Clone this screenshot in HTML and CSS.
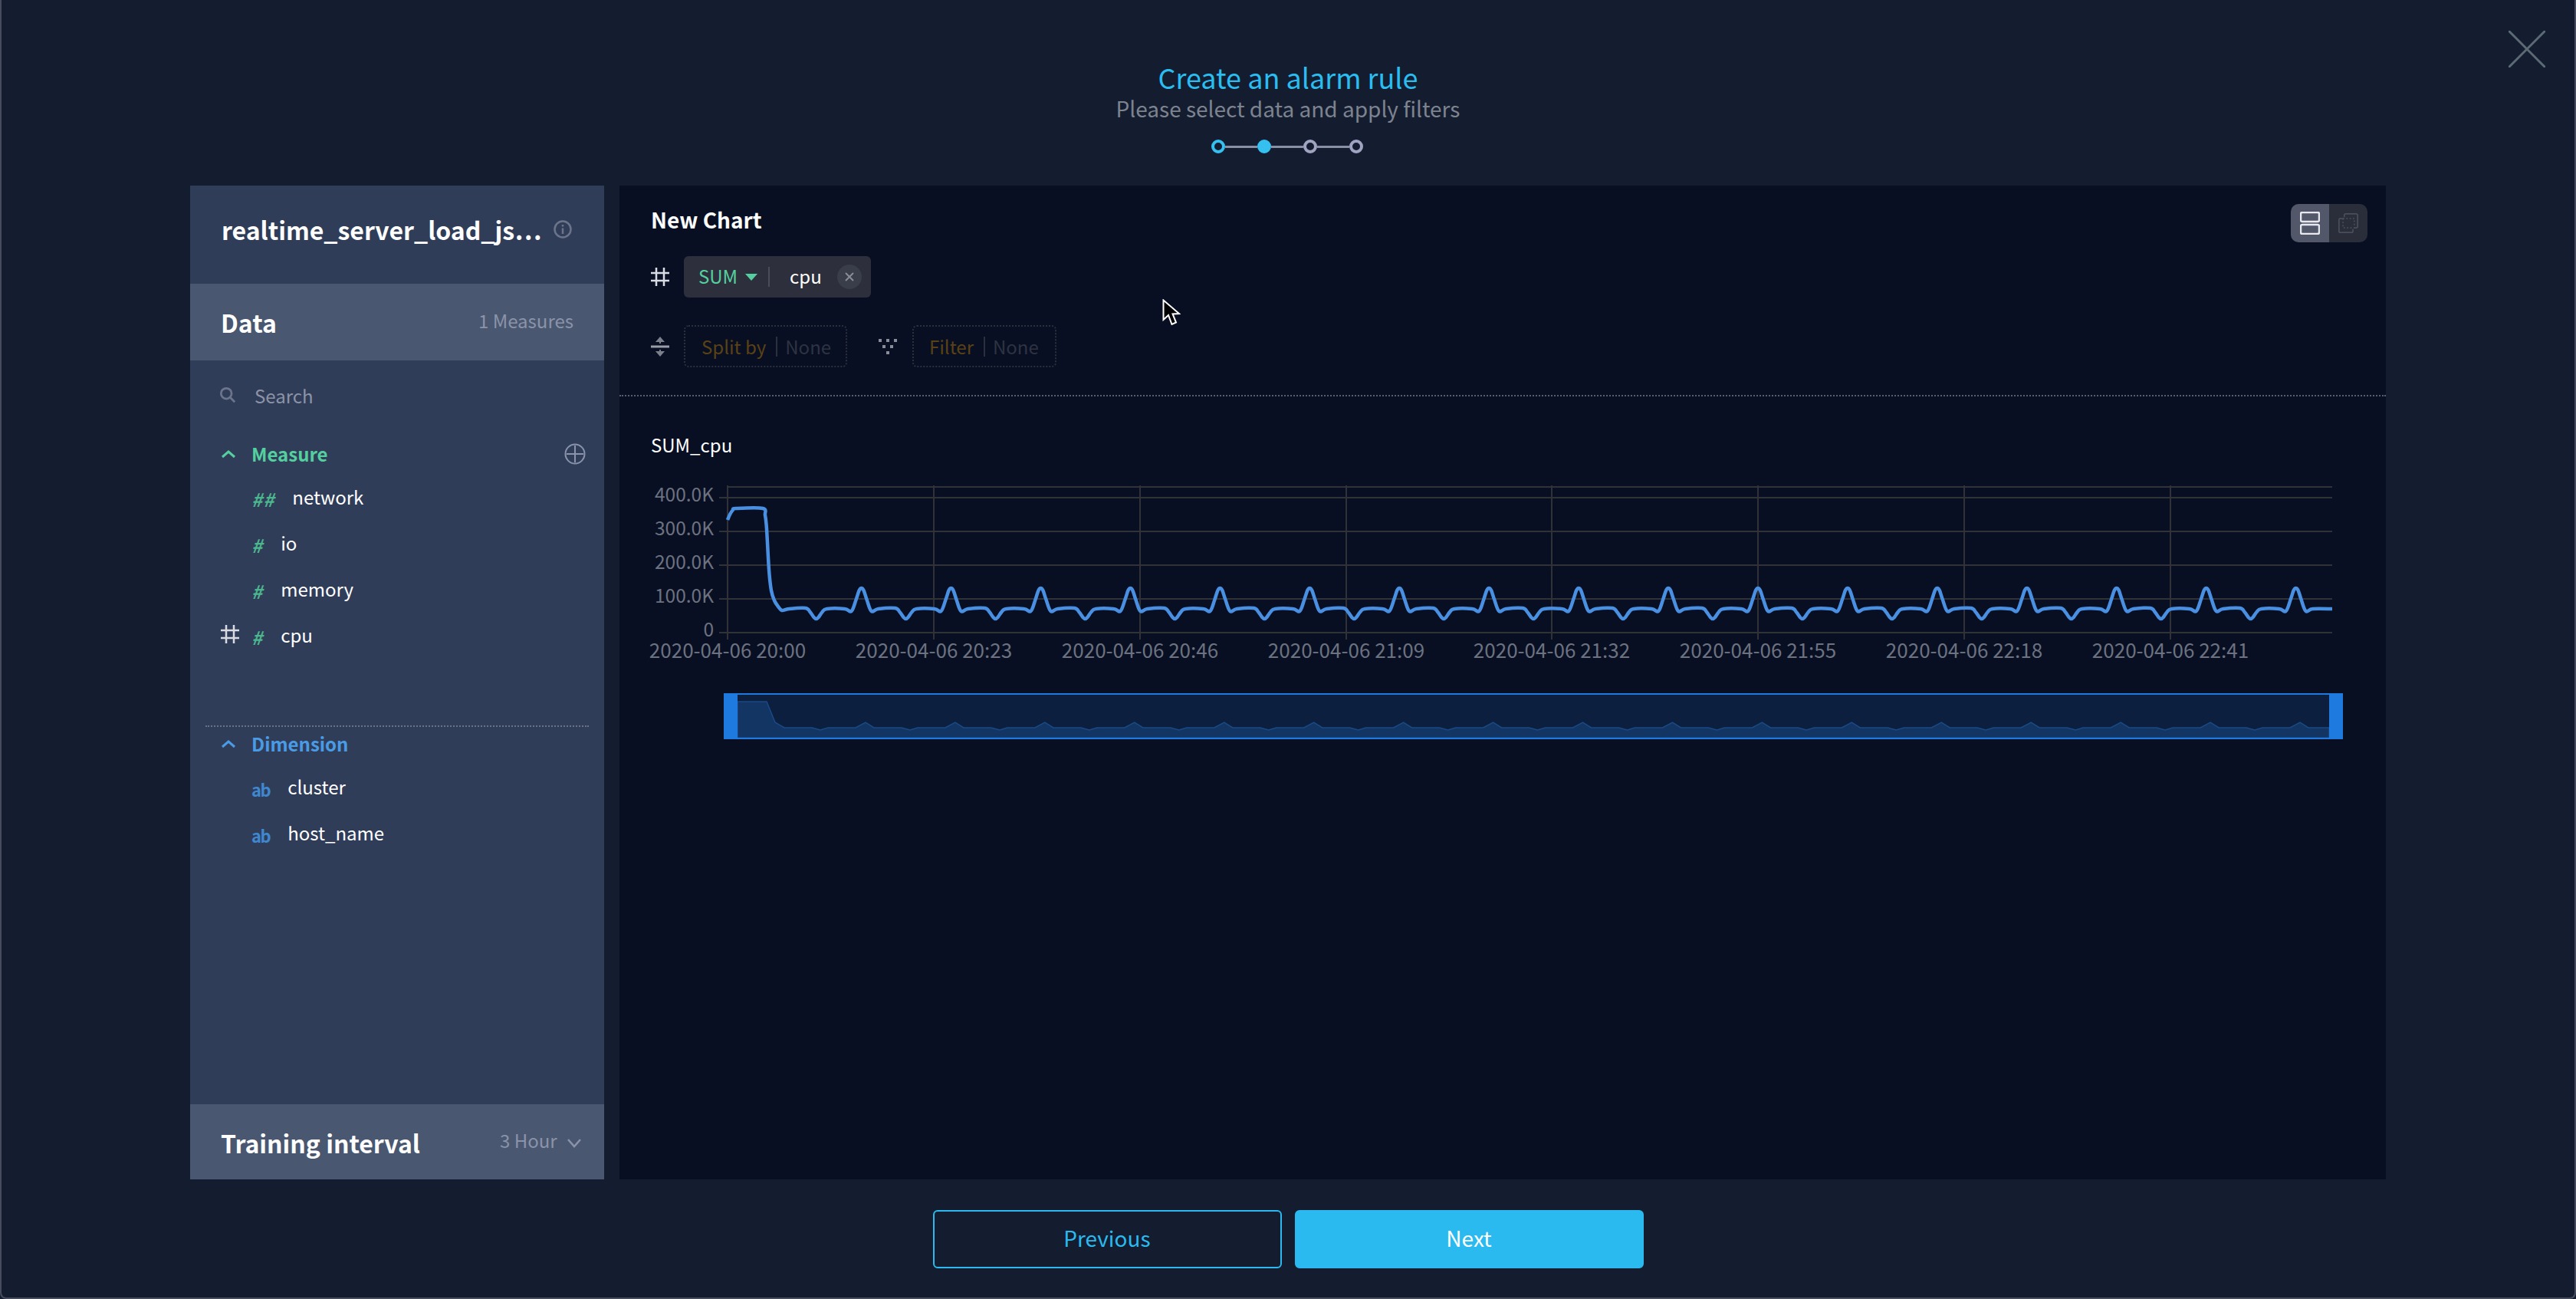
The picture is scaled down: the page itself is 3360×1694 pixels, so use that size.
FILE: index.html
```html
<!DOCTYPE html>
<html lang="en">

<head>
    <meta charset="UTF-8">
    <title>Create an alarm rule</title>
    <link rel="stylesheet" href="styles.css">
</head>

<body>
    <div class="app">
        <svg class="close" viewBox="0 0 48 48"><path d="M0 0L48 48M48 0L0 48" /></svg>

        <header class="head">
            <h1>Create an alarm rule</h1>
            <p>Please select data and apply filters</p>
            <div class="steps">
                <span class="step done"></span><i></i>
                <span class="step on"></span><i></i>
                <span class="step"></span><i></i>
                <span class="step"></span>
            </div>
        </header>

        <div class="panels">
            <aside class="side">
                <div class="side-title">
                    <span class="ds-name">realtime_server_load_js⋯</span>
                    <svg class="info" viewBox="0 0 24 24">
                        <circle cx="12" cy="12" r="10.5" />
                        <path d="M12 10.5V18M12 6v2.4" />
                    </svg>
                </div>
                <div class="bar">
                    <b>Data</b>
                    <span class="bar-val up">1 Measures</span>
                </div>
                <div class="side-body">
                    <div class="search">
                        <svg viewBox="0 0 24 24">
                            <circle cx="10" cy="10" r="7.5" />
                            <path d="M15.5 15.5L22 22" />
                        </svg>
                        <span>Search</span>
                    </div>

                    <div class="group-head green">
                        <svg class="chev" viewBox="0 0 20 12"><path d="M2 10L10 3L18 10" /></svg>
                        <span>Measure</span>
                        <svg class="plus" viewBox="0 0 28 28">
                            <circle cx="14" cy="14" r="12.5" />
                            <path d="M14 3V25M3 14H25" />
                        </svg>
                    </div>
                    <ul class="fields">
                        <li><em class="num">##</em>network</li>
                        <li><em class="num">#</em>io</li>
                        <li><em class="num">#</em>memory</li>
                        <li>
                            <svg class="hash used" viewBox="0 0 24 24"><path d="M7 0V24M17 0V24M0 7H24M0 17H24" /></svg>
                            <em class="num">#</em>cpu
                        </li>
                    </ul>

                    <div class="group-head blue dim">
                        <svg class="chev" viewBox="0 0 20 12"><path d="M2 10L10 3L18 10" /></svg>
                        <span>Dimension</span>
                    </div>
                    <ul class="fields second">
                        <li><em class="str">ab</em>cluster</li>
                        <li><em class="str">ab</em>host_name</li>
                    </ul>
                </div>
                <div class="bar bar-low">
                    <b>Training interval</b>
                    <span class="bar-val">3 Hour
                        <svg viewBox="0 0 18 12"><path d="M1 1L9 10L17 1" /></svg>
                    </span>
                </div>
            </aside>

            <main class="main">
                <div class="query">
                    <div class="chart-title">
                        <b>New Chart</b>
                        <div class="toggle">
                            <span class="tog on">
                                <svg viewBox="0 0 26 30">
                                    <rect x="1" y="1" width="24" height="12" rx="2" />
                                    <rect x="1" y="17" width="24" height="12" rx="2" />
                                </svg>
                            </span>
                            <span class="tog">
                                <svg viewBox="0 0 30 30">
                                    <path d="M9 6V3a2 2 0 0 1 2-2h16a2 2 0 0 1 2 2v17a2 2 0 0 1-2 2h-3" />
                                    <path d="M6 8H3a2 2 0 0 0-2 2v17a2 2 0 0 0 2 2h17a2 2 0 0 0 2-2v-3" />
                                    <rect x="7" y="8" width="17" height="14" stroke-dasharray="2 3" />
                                </svg>
                            </span>
                        </div>
                    </div>
                    <div class="row row-measure">
                        <svg class="hash" viewBox="0 0 24 24"><path d="M7 0V24M17 0V24M0 7H24M0 17H24" /></svg>
                        <div class="chip">
                            <span class="agg">SUM</span>
                            <span class="tri"></span>
                            <span class="chip-sep"></span>
                            <span class="chip-name">cpu</span>
                            <span class="chip-x">
                                <svg viewBox="0 0 12 12"><path d="M1 1L11 11M11 1L1 11" /></svg>
                            </span>
                        </div>
                    </div>
                    <div class="row row-slots">
                        <svg class="split" viewBox="0 0 24 28">
                            <path class="fat" d="M0 14H24" />
                            <path d="M12 2V10M12 18V26" />
                            <path class="solid" d="M6 8L12 1L18 8ZM6 20L12 27L18 20Z" />
                        </svg>
                        <div class="slot">
                            <span class="slot-name">Split by</span><span class="slot-sep"></span><span class="slot-val">None</span>
                        </div>
                        <svg class="funnel" viewBox="0 0 24 20">
                            <rect x="0" y="0" width="4" height="4" />
                            <rect x="10" y="0" width="4" height="4" />
                            <rect x="20" y="0" width="4" height="4" />
                            <rect x="5" y="8" width="4" height="4" />
                            <rect x="15" y="8" width="4" height="4" />
                            <rect x="10" y="16" width="4" height="4" />
                        </svg>
                        <div class="slot slot-filter">
                            <span class="slot-name">Filter</span><span class="slot-sep"></span><span class="slot-val">None</span>
                        </div>
                    </div>
                </div>

                <div class="chart-wrap">
                    <div class="series">SUM_cpu</div>
                    <svg id="chart" class="chart" viewBox="808 620 2304 360"></svg>
                </div>

                <svg class="cursor" viewBox="0 0 24 36">
                    <path d="M1.5 1.5V27L8 21L12.5 33L18 30.5L13.5 19.5L22 19Z" />
                </svg>
            </main>
        </div>

        <footer class="foot">
            <button class="btn btn-line">Previous</button>
            <button class="btn btn-fill">Next</button>
        </footer>
    </div>

    <script src="chart.js"></script>
</body>

</html>
```

FILE: styles.css
```css
* {
    box-sizing: border-box;
}

body {
    margin: 0;
    background: #141d30;
    font-family: "Noto Sans CJK KR", "Noto Sans", sans-serif;
    color: #fff;
}

.app {
    position: relative;
    height: 1694px;
    background: #141d30;
    border-left: 2px solid #474c5d;
    border-right: 2px solid #474c5d;
    border-bottom: 2px solid #474c5d;
    border-radius: 0 0 8px 8px;
    display: flex;
    flex-direction: column;
}

.close {
    position: absolute;
    top: 40px;
    right: 38px;
    width: 48px;
    height: 48px;
    fill: none;
    stroke: #5c6a75;
    stroke-width: 3;
}

/* header */
.head {
    height: 242px;
    padding-top: 78px;
    text-align: center;
}

.head h1 {
    margin: 0;
    font-size: 36px;
    line-height: 44px;
    font-weight: 400;
    color: #2abdf0;
}

.head p {
    margin: 0;
    font-size: 28px;
    line-height: 38px;
    color: #7d838f;
}

.steps {
    margin: 22px 2px 0 0;
    display: flex;
    justify-content: center;
    align-items: center;
}

.steps i {
    width: 42px;
    height: 3px;
    background: #8a8fa8;
}

.step {
    width: 18px;
    height: 18px;
    border-radius: 50%;
    border: 4px solid #a0a4c0;
}

.step.done {
    border-color: #35c0f0;
}

.step.on {
    border-color: #35c0f0;
    background: #35c0f0;
}

/* panels */
.panels {
    height: 1296px;
    padding-left: 246px;
    display: flex;
}

.side {
    width: 540px;
    background: #303d59;
    display: flex;
    flex-direction: column;
}

.side-title {
    height: 128px;
    padding: 0 0 14px 41px;
    display: flex;
    align-items: center;
}

.ds-name {
    width: 416px;
    font-size: 32px;
    font-weight: 700;
    white-space: nowrap;
}

.info {
    width: 24px;
    height: 24px;
    margin-left: 17px;
    fill: none;
    stroke: #6c748a;
    stroke-width: 2.5;
}

.bar {
    height: 100px;
    background: #4a5770;
    padding: 0 40px;
    display: flex;
    justify-content: space-between;
    align-items: center;
}

.bar b {
    font-size: 32px;
    font-weight: 700;
}

.bar-val {
    font-size: 24px;
    color: #8a93aa;
}

.bar-val.up {
    margin-top: -5px;
}

.bar-low {
    height: 98px;
    padding-right: 30px;
}

.bar-low b {
    margin-top: 2px;
}

.bar-low .bar-val {
    margin-top: -6px;
}

.bar-val svg {
    width: 18px;
    height: 12px;
    margin-left: 8px;
    fill: none;
    stroke: #8a93aa;
    stroke-width: 2.5;
}

.side-body {
    flex: 1;
}

.search {
    margin-top: 15px;
    height: 60px;
    padding-left: 38px;
    display: flex;
    align-items: center;
    gap: 24px;
    font-size: 24px;
    color: #8c93a6;
}

.search svg {
    width: 22px;
    height: 22px;
    fill: none;
    stroke: #6c748a;
    stroke-width: 3;
}

.group-head {
    margin-top: 23px;
    height: 46px;
    padding: 0 12px 0 40px;
    display: flex;
    align-items: center;
    font-size: 24px;
    font-weight: 700;
}

.group-head span {
    margin-left: 20px;
    flex: 1;
}

.green {
    color: #55cf9f;
}

.blue {
    color: #4a9be6;
}

.chev {
    width: 20px;
    height: 12px;
    margin-top: 2px;
    fill: none;
    stroke: currentColor;
    stroke-width: 3;
}

.plus {
    width: 28px;
    height: 28px;
    margin: 2px 12px 0 0;
    fill: none;
    stroke: #8a93aa;
    stroke-width: 2;
}

.dim {
    margin: 89px 20px 0;
    padding: 0 0 2px 20px;
    height: 46px;
    border-top: 2px dotted #6a7389;
}

.fields {
    list-style: none;
    margin: 3px 0 0;
    padding: 0 0 0 80px;
    position: relative;
}

.fields.second {
    margin-top: 3px;
}

.fields li {
    position: relative;
    height: 60px;
    display: flex;
    align-items: center;
    gap: 23px;
    font-size: 24px;
}

.fields em {
    line-height: 1;
    font-weight: 700;
    margin-top: 8px;
}

.num {
    font-size: 24px;
    color: #4cb68e;
    letter-spacing: 1px;
}

.str {
    font-size: 22px;
    font-style: normal;
    color: #3f87cf;
    letter-spacing: -1.5px;
}

.hash {
    width: 24px;
    height: 24px;
    fill: none;
    stroke: #d8dbe2;
    stroke-width: 2.5;
}

.hash.used {
    position: absolute;
    left: -40px;
    top: 18px;
}

/* main panel */
.main {
    position: relative;
    width: 2304px;
    margin-left: 20px;
    background: #080f23;
}

.query {
    height: 275px;
    padding: 24px 0 0 41px;
    border-bottom: 2px dotted #5a5e6a;
}

.chart-title {
    height: 40px;
    padding-right: 24px;
    display: flex;
    justify-content: space-between;
    align-items: flex-start;
    font-size: 28px;
    line-height: 40px;
}

.toggle {
    display: flex;
    border-radius: 10px;
    overflow: hidden;
}

.tog {
    width: 50px;
    height: 50px;
    background: #2a2d3a;
    display: flex;
    justify-content: center;
    align-items: center;
}

.tog.on {
    background: #525769;
}

.tog svg {
    width: 26px;
    height: 30px;
    fill: none;
    stroke: #4a4d5a;
    stroke-width: 2;
}

.tog.on svg {
    stroke: #e6e8ee;
    stroke-width: 2.5;
}

.row {
    display: flex;
    align-items: center;
}

.row-measure {
    margin-top: 28px;
    height: 54px;
    gap: 19px;
}

.row-slots {
    margin-top: 36px;
    height: 55px;
}

.chip {
    width: 244px;
    height: 54px;
    padding-left: 19px;
    background: #2d303c;
    border-radius: 6px;
    display: flex;
    align-items: center;
    font-size: 24px;
}

.agg {
    margin-top: -3px;
    color: #55cf9f;
}

.tri {
    margin-left: 10px;
    border-left: 8px solid transparent;
    border-right: 8px solid transparent;
    border-top: 9px solid #55cf9f;
}

.chip-sep {
    width: 2px;
    height: 26px;
    margin-left: 14px;
    background: #4a4d58;
}

.chip-name {
    margin: -3px 0 0 26px;
    width: 62px;
}

.chip-x {
    width: 32px;
    height: 32px;
    border-radius: 50%;
    background: #3a3d4a;
    display: flex;
    justify-content: center;
    align-items: center;
}

.chip-x svg {
    width: 12px;
    height: 12px;
    fill: none;
    stroke: #8a8d98;
    stroke-width: 2;
}

.split {
    width: 24px;
    height: 28px;
    margin-right: 19px;
    fill: none;
    stroke: #7c808c;
    stroke-width: 2;
}

.split .fat {
    stroke: #9a9da8;
    stroke-width: 3;
}

.split .solid {
    fill: #7c808c;
    stroke: none;
}

.slot {
    width: 213px;
    height: 55px;
    padding-left: 21px;
    border: 2px dotted #2c303c;
    border-radius: 6px;
    display: flex;
    align-items: center;
    font-size: 24px;
}

.slot-filter {
    width: 188px;
    padding-left: 20px;
}

.slot-name {
    color: #5b4214;
}

.slot-sep {
    width: 2px;
    height: 26px;
    margin: 0 10px 0 13px;
    background: #2c303c;
}

.slot-val {
    color: #2e3342;
}

.funnel {
    width: 24px;
    height: 20px;
    margin: 0 20px 0 41px;
    fill: #8a8d98;
}

.chart-wrap {
    padding-top: 48px;
}

.series {
    padding-left: 41px;
    font-size: 24px;
    line-height: 30px;
    height: 30px;
}

.chart {
    display: block;
    margin-top: 25px;
    width: 2304px;
    height: 360px;
    font-family: "Noto Sans CJK KR", "Noto Sans", sans-serif;
    font-size: 26px;
}

.chart .grid {
    stroke: #303238;
    stroke-width: 2;
    fill: none;
}

.chart .lbl {
    fill: #6c7280;
}

.chart .lbl-y {
    font-size: 24.5px;
}

.chart .line {
    fill: none;
    stroke: #4a90e2;
    stroke-width: 4.5;
}

.chart .over-bg {
    fill: #0c1f3f;
}

.chart .over-area {
    fill: #123563;
    stroke: #1a4a85;
    stroke-width: 1.5;
}

.chart .over-edge {
    fill: #1f7ae0;
}

.cursor {
    position: absolute;
    left: 708px;
    top: 148px;
    width: 24px;
    height: 36px;
    fill: #000;
    stroke: #fff;
    stroke-width: 2;
}

/* footer */
.foot {
    padding-top: 40px;
    display: flex;
    justify-content: center;
    gap: 17px;
}

.btn {
    width: 455px;
    height: 76px;
    padding-bottom: 5px;
    border-radius: 6px;
    font-family: inherit;
    font-size: 28px;
    border: 2px solid #2bbaef;
}

.btn-line {
    background: transparent;
    color: #2bbaef;
}

.btn-fill {
    background: #2bbaef;
    color: #fff;
}
```

FILE: chart.js
```js
var NS = 'http://www.w3.org/2000/svg';
var chart = document.getElementById('chart');

function add(tag, attrs, text) {
    var el = document.createElementNS(NS, tag);
    for (var k in attrs) el.setAttribute(k, attrs[k]);
    if (text) el.textContent = text;
    chart.appendChild(el);
    return el;
}

// grid
var left = 949, right = 3042;
var yVals = [[649, '400.0K'], [693, '300.0K'], [737, '200.0K'], [781, '100.0K'], [825, '0']];
var xVals = ['20:00', '20:23', '20:46', '21:09', '21:32', '21:55', '22:18', '22:41'];

add('path', { class: 'grid', d: 'M' + left + ' 635H' + right });
yVals.forEach(function (v) {
    add('path', { class: 'grid', d: 'M938 ' + v[0] + 'H' + right });
    add('text', { class: 'lbl lbl-y', x: 931, y: v[0] + 5, 'text-anchor': 'end' }, v[1]);
});
xVals.forEach(function (t, i) {
    var x = Math.round(left + i * 268.85);
    add('path', { class: 'grid', d: 'M' + x + ' 633V834' });
    add('text', { class: 'lbl', x: x, y: 858, 'text-anchor': 'middle' }, '2020-04-06 ' + t);
});

// main line
var period = 116.94, p0 = 1006.6;
var pts = [[949, 678], [952, 671], [956, 665], [960, 663], [995, 663], [998, 672], [1000, 690], [1003, 743],
    [1006, 770], [1010, 783], [1015, 791], [1020, 796], [1029, 794]];
var shape = [[44, 793], [50, 798], [55, 805], [58, 807], [61, 805], [66, 798], [72, 794], [95, 794], [104, 797],
    [110, 782], [114, 770], [117, 767], [120, 770], [124, 782], [130, 797], [139, 794]];
for (var n = 0; n < 17; n++) {
    shape.forEach(function (s) {
        pts.push([p0 + n * period + s[0], s[1]]);
    });
}
pts.push([right, 794]);

// catmull-rom through the points, keeps it smooth like the original line
var d = 'M' + pts[0][0] + ' ' + pts[0][1];
for (var i = 0; i < pts.length - 1; i++) {
    var a = pts[i - 1] || pts[i], b = pts[i], c = pts[i + 1], e = pts[i + 2] || c;
    d += 'C' + (b[0] + (c[0] - a[0]) / 6).toFixed(1) + ' ' + (b[1] + (c[1] - a[1]) / 6).toFixed(1) + ' ' +
        (c[0] - (e[0] - b[0]) / 6).toFixed(1) + ' ' + (c[1] - (e[1] - b[1]) / 6).toFixed(1) + ' ' +
        c[0].toFixed(1) + ' ' + c[1];
}
add('path', { class: 'line', d: d });

// overview
add('rect', { class: 'over-bg', x: 962, y: 906, width: 2076, height: 56 });
var o = 'M962 962V915H1000L1011 942L1023 949';
for (var m = 0; m < 17; m++) {
    var s = 1012 + m * 116.94;
    o += 'H' + (s + 47).toFixed(1) + 'L' + (s + 58).toFixed(1) + ' 952L' + (s + 68).toFixed(1) + ' 949H' +
        (s + 104).toFixed(1) + 'L' + (s + 117).toFixed(1) + ' 942L' + (s + 128).toFixed(1) + ' 949';
}
o += 'H3038V962Z';
add('path', { class: 'over-area', d: o });
add('rect', { class: 'over-edge', x: 944, y: 904, width: 18, height: 60 });
add('rect', { class: 'over-edge', x: 3038, y: 904, width: 18, height: 60 });
add('rect', { class: 'over-edge', x: 962, y: 904, width: 2076, height: 2 });
add('rect', { class: 'over-edge', x: 962, y: 962, width: 2076, height: 2 });
```
